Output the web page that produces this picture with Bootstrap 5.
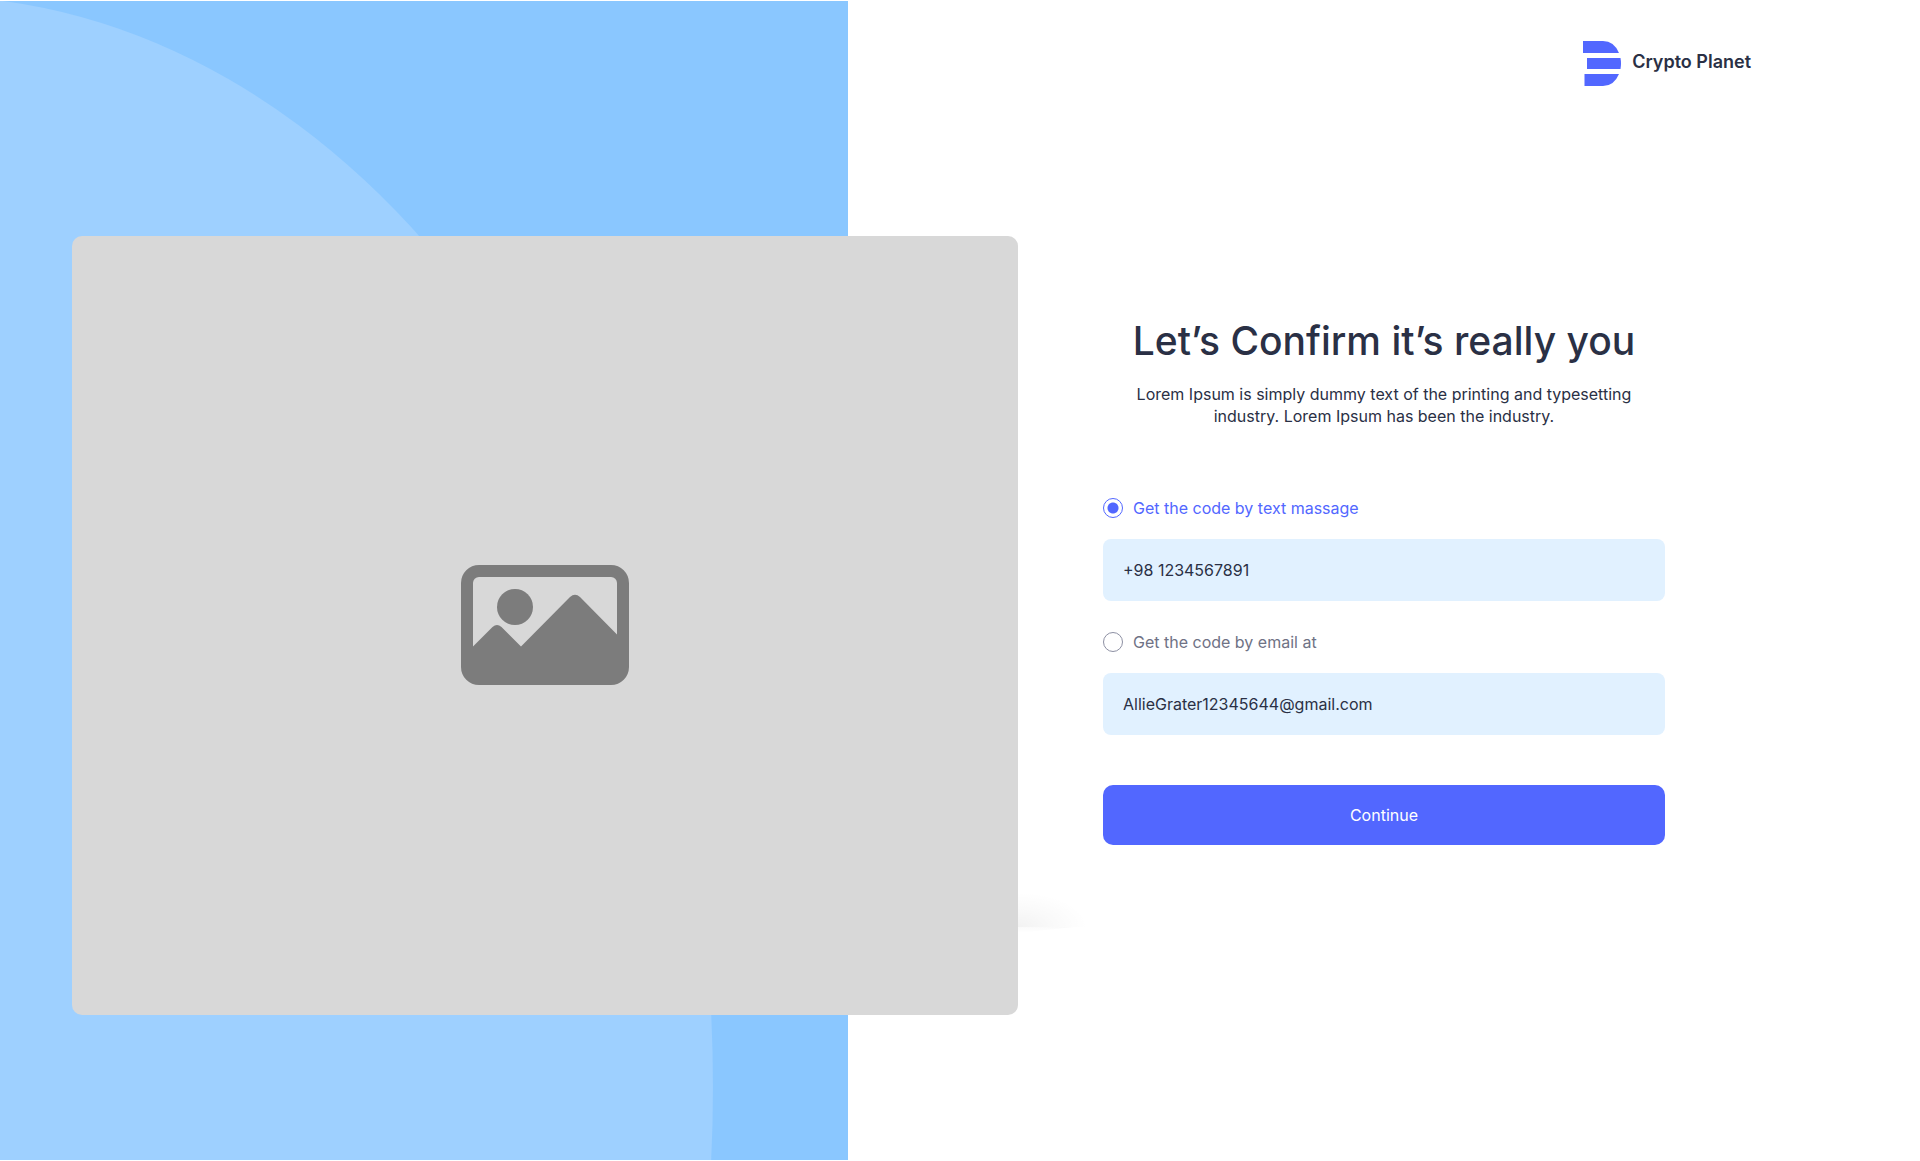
<!DOCTYPE html>
<html lang="en">
<head>
<meta charset="utf-8">
<meta name="viewport" content="width=device-width, initial-scale=1">
<title>Crypto Planet – Confirm it's you</title>
<link href="https://cdn.jsdelivr.net/npm/bootstrap@5.3.0/dist/css/bootstrap.min.css" rel="stylesheet">
<style>
  :root { --brand: #5267ff; --ink: #2a3045; --field: #e1f1ff; }
  body { font-family: Inter, "Open Sans", sans-serif; font-size: 16px; color: var(--ink); background: #fff; }
  .visual { width: 53.02%; padding: 236px 0 0 72px; }
  .backdrop { width: 83.3%; padding: 1px 0; }
  .backdrop svg { background: #8ac7ff; }
  .placeholder-card { aspect-ratio: 946 / 779; background: #d8d8d8; border-radius: 10px; }
  .picture-icon { width: 168px; }
  .soft-shade { left: 100%; top: 649px; width: 72px; height: 48px; }
  .side { padding: 40px 85px 40px; }
  .brand-link { margin-right: 84px; gap: 11px; color: var(--ink); font-size: 18px; line-height: 24px; font-weight: 600; }
  .brand-link span { padding-bottom: 2px; }
  .confirm { max-width: 562px; margin-top: 230px; }
  .confirm h1 { font-size: 39px; line-height: 50px; font-weight: 500; margin-bottom: 17px; }
  .intro { line-height: 22px; margin-bottom: 69px; }
  .choice { gap: 10px; line-height: 24px; margin-bottom: 19px; color: #6f7285; }
  .choice:has(:checked) { color: var(--brand); }
  .choice .form-check-input { width: 20px; height: 20px; margin: 0; border: 1px solid #8d90a3; background-color: #fff; }
  .choice .form-check-input:checked { border-color: var(--brand); background-image: radial-gradient(circle, var(--brand) 5px, transparent 6px); }
  .field { height: 62px; padding: 0 20px; border: 0; border-radius: 8px; background: var(--field); color: var(--ink); margin-bottom: 29px; }
  .btn-go { height: 60px; margin-top: 21px; border-radius: 10px; border: 0; --bs-btn-bg: var(--brand); --bs-btn-hover-bg: #4457e6; }
</style>
</head>
<body>
<div class="d-flex min-vh-100">
  <section class="visual position-relative flex-shrink-0">
    <div class="backdrop position-absolute top-0 start-0 h-100">
      <svg class="d-block w-100 h-100" viewBox="0 0 848 1159" preserveAspectRatio="none" aria-hidden="true">
        <ellipse cx="-72" cy="1086" rx="785" ry="1091" fill="#9ed0ff"/>
      </svg>
    </div>
    <div class="placeholder-card position-relative d-flex align-items-center justify-content-center">
      <svg class="picture-icon" viewBox="0 0 168 120" fill="#7c7c7c" role="img" aria-label="Image placeholder">
        <path fill-rule="evenodd" d="M18 0H150a18 18 0 0 1 18 18V102a18 18 0 0 1-18 18H18a18 18 0 0 1-18-18V18A18 18 0 0 1 18 0ZM18 12a6 6 0 0 0-6 6V81.500L31.500 62q4.500-4 9 0L60 81.500 109 32q5-4.500 10 0L156 69.500V18a6 6 0 0 0-6-6Z"/>
        <circle cx="54" cy="42" r="18"/>
      </svg>
      <svg class="soft-shade position-absolute" viewBox="0 0 72 48" preserveAspectRatio="none" aria-hidden="true">
        <defs>
          <radialGradient id="shadeUp" gradientUnits="userSpaceOnUse" cx="0" cy="42" r="70" gradientTransform="matrix(1 0 0 .5 0 21)">
            <stop offset="0" stop-color="#000" stop-opacity=".05"/>
            <stop offset=".5" stop-color="#000" stop-opacity=".022"/>
            <stop offset="1" stop-color="#000" stop-opacity="0"/>
          </radialGradient>
          <linearGradient id="shadeDown" x1="0" y1="0" x2="0" y2="1">
            <stop offset="0" stop-color="#000" stop-opacity=".02"/>
            <stop offset="1" stop-color="#000" stop-opacity="0"/>
          </linearGradient>
        </defs>
        <path d="M0 0H72V42H0Z" fill="url(#shadeUp)"/>
        <path d="M0 42H56L0 48Z" fill="url(#shadeDown)"/>
      </svg>
    </div>
  </section>

  <main class="side flex-grow-1">
    <header class="d-flex justify-content-end">
      <a class="brand-link d-flex align-items-center text-decoration-none" href="#">
        <svg width="38" height="46" viewBox="0 0 38 46" fill="#5267ff" aria-hidden="true">
          <path d="M0 1H20Q31 1 36 13H0Z"/>
          <path d="M4 18H37.500Q38.500 23.500 37.500 29H4Z"/>
          <path d="M1.500 34H36Q31 46 20 46H1.500Z"/>
        </svg>
        <span>Crypto Planet</span>
      </a>
    </header>
    <form class="confirm">
      <h1 class="text-center">Let’s Confirm it’s really you</h1>
      <p class="intro text-center">Lorem Ipsum is simply dummy text of the printing and typesetting<br>industry. Lorem Ipsum has been the industry.</p>

      <div class="choice d-flex align-items-center">
        <input class="form-check-input shadow-none" type="radio" name="method" id="bySms" checked>
        <label for="bySms">Get the code by text massage</label>
      </div>
      <input class="field form-control" type="tel" value="+98 1234567891" aria-label="Phone number">

      <div class="choice d-flex align-items-center">
        <input class="form-check-input shadow-none" type="radio" name="method" id="byMail">
        <label for="byMail">Get the code by email at</label>
      </div>
      <input class="field form-control" type="email" value="AllieGrater12345644@gmail.com" aria-label="Email address">

      <button class="btn-go btn btn-primary w-100" type="button">Continue</button>
    </form>
  </main>
</div>
<script src="https://cdn.jsdelivr.net/npm/bootstrap@5.3.0/dist/js/bootstrap.bundle.min.js"></script>
</body>
</html>
